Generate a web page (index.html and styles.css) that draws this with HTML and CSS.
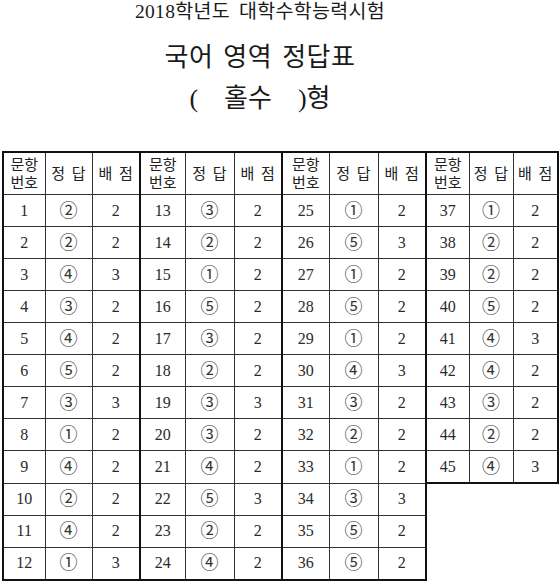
FILE: index.html
```html
<!DOCTYPE html>
<html lang="ko">
<head>
<meta charset="utf-8">
<link rel="stylesheet" href="styles.css">
</head>
<body>
<div class="titles">
  <div class="t1">2018학년도 대학수학능력시험</div>
  <div class="t2">국어 영역 정답표</div>
  <div class="t3">(&nbsp;&nbsp;&nbsp;&nbsp;홀수&nbsp;&nbsp;&nbsp;&nbsp;)형</div>
</div>
<table class="ans">
  <colgroup>
    <col class="w42"><col class="w47"><col class="w48">
    <col class="w45"><col class="w49"><col class="w48">
    <col class="w47"><col class="w49"><col class="w48">
    <col class="w43"><col class="w44"><col class="w45">
  </colgroup>
  <thead>
    <tr>
      <th class="gl">문항<br>번호</th><th>정 답</th><th>배 점</th>
      <th class="gl">문항<br>번호</th><th>정 답</th><th>배 점</th>
      <th class="gl">문항<br>번호</th><th>정 답</th><th>배 점</th>
      <th class="gl">문항<br>번호</th><th>정 답</th><th class="gr">배 점</th>
    </tr>
  </thead>
  <tbody>
    <tr><td class="gl">1</td><td>②</td><td>2</td><td class="gl">13</td><td>③</td><td>2</td><td class="gl">25</td><td>①</td><td>2</td><td class="gl">37</td><td>①</td><td class="gr">2</td></tr>
    <tr><td class="gl">2</td><td>②</td><td>2</td><td class="gl">14</td><td>②</td><td>2</td><td class="gl">26</td><td>⑤</td><td>3</td><td class="gl">38</td><td>②</td><td class="gr">2</td></tr>
    <tr><td class="gl">3</td><td>④</td><td>3</td><td class="gl">15</td><td>①</td><td>2</td><td class="gl">27</td><td>①</td><td>2</td><td class="gl">39</td><td>②</td><td class="gr">2</td></tr>
    <tr><td class="gl">4</td><td>③</td><td>2</td><td class="gl">16</td><td>⑤</td><td>2</td><td class="gl">28</td><td>⑤</td><td>2</td><td class="gl">40</td><td>⑤</td><td class="gr">2</td></tr>
    <tr><td class="gl">5</td><td>④</td><td>2</td><td class="gl">17</td><td>③</td><td>2</td><td class="gl">29</td><td>①</td><td>2</td><td class="gl">41</td><td>④</td><td class="gr">3</td></tr>
    <tr><td class="gl">6</td><td>⑤</td><td>2</td><td class="gl">18</td><td>②</td><td>2</td><td class="gl">30</td><td>④</td><td>3</td><td class="gl">42</td><td>④</td><td class="gr">2</td></tr>
    <tr><td class="gl">7</td><td>③</td><td>3</td><td class="gl">19</td><td>③</td><td>3</td><td class="gl">31</td><td>③</td><td>2</td><td class="gl">43</td><td>③</td><td class="gr">2</td></tr>
    <tr><td class="gl">8</td><td>①</td><td>2</td><td class="gl">20</td><td>③</td><td>2</td><td class="gl">32</td><td>②</td><td>2</td><td class="gl">44</td><td>②</td><td class="gr">2</td></tr>
    <tr><td class="gl">9</td><td>④</td><td>2</td><td class="gl">21</td><td>④</td><td>2</td><td class="gl">33</td><td>①</td><td>2</td><td class="gl gb">45</td><td class="gb">④</td><td class="gr gb">3</td></tr>
    <tr><td class="gl">10</td><td>②</td><td>2</td><td class="gl">22</td><td>⑤</td><td>3</td><td class="gl">34</td><td>③</td><td class="gr">3</td><td class="empty"></td><td class="empty"></td><td class="empty"></td></tr>
    <tr><td class="gl">11</td><td>④</td><td>2</td><td class="gl">23</td><td>②</td><td>2</td><td class="gl">35</td><td>⑤</td><td class="gr">2</td><td class="empty"></td><td class="empty"></td><td class="empty"></td></tr>
    <tr class="last"><td class="gl">12</td><td>①</td><td>3</td><td class="gl">24</td><td>④</td><td>2</td><td class="gl">36</td><td>⑤</td><td class="gr">2</td><td class="empty"></td><td class="empty"></td><td class="empty"></td></tr>
  </tbody>
</table>
</body>
</html>
```

FILE: styles.css
```css
html, body {
  margin: 0;
  padding: 0;
  background: #fff;
}
body {
  font-family: "Liberation Serif", "Noto Sans CJK KR", serif;
  color: #1a1a1a;
  width: 560px;
  overflow: hidden;
}
.titles {
  text-align: center;
  padding-right: 40px;
  margin-bottom: 34px;
}
.t1 {
  font-size: 19.5px;
  line-height: 24px;
  letter-spacing: 0.3px;
  word-spacing: 4px;
}
.t2 {
  font-size: 26px;
  line-height: 36px;
  margin-top: 16px;
  letter-spacing: 0.5px;
  word-spacing: 3px;
}
.t3 {
  font-size: 26px;
  line-height: 36px;
  margin-top: 5px;
}
.ans {
  border-collapse: collapse;
  table-layout: fixed;
  width: 555px;
  margin-left: 2px;
}
.w42 { width: 42px; }
.w43 { width: 43px; }
.w44 { width: 44px; }
.w45 { width: 45px; }
.w47 { width: 47px; }
.w48 { width: 48px; }
.w49 { width: 49px; }
.ans th, .ans td {
  border: 1px solid #333;
  text-align: center;
  padding: 0;
  font-weight: normal;
}
.ans th {
  height: 41px;
  font-size: 15px;
  line-height: 18px;
  word-spacing: 3px;
  white-space: nowrap;
  border-top: 2px solid #111;
  border-bottom: 1px solid #333;
  color: #222;
}
.ans td {
  height: 31px;
  font-size: 16px;
  line-height: 20px;
  color: #2a2a2a;
}
.ans tbody td:nth-child(3n+2) {
  font-size: 18px;
  color: #333;
}
.ans .gl { border-left: 2px solid #111; }
.ans .gr { border-right: 2px solid #111; }
.ans .gb { border-bottom: 2px solid #111; }
.ans tr.last td { border-bottom: 2px solid #111; }
.ans td.empty {
  border: none;
}
.ans tr.last td.empty { border-bottom: none; }
```
